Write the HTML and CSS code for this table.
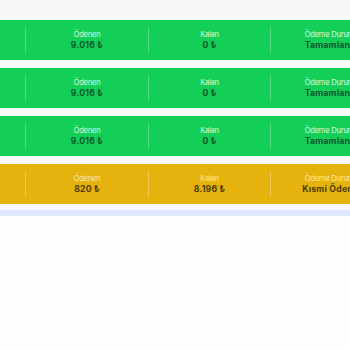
FILE: index.html
```html
<!DOCTYPE html>
<html lang="tr">
<head>
<meta charset="utf-8">
<link rel="stylesheet" href="styles.css">
</head>
<body>
<div class="list">
  <div class="card paid">
    <div class="cell"></div>
    <div class="cell"><span class="label">Ödenen</span><span class="value">9.016 ₺</span></div>
    <div class="cell"><span class="label">Kalan</span><span class="value">0 ₺</span></div>
    <div class="cell"><span class="label">Ödeme Durumu</span><span class="value">Tamamlandı</span></div>
  </div>
  <div class="card paid">
    <div class="cell"></div>
    <div class="cell"><span class="label">Ödenen</span><span class="value">9.016 ₺</span></div>
    <div class="cell"><span class="label">Kalan</span><span class="value">0 ₺</span></div>
    <div class="cell"><span class="label">Ödeme Durumu</span><span class="value">Tamamlandı</span></div>
  </div>
  <div class="card paid">
    <div class="cell"></div>
    <div class="cell"><span class="label">Ödenen</span><span class="value">9.016 ₺</span></div>
    <div class="cell"><span class="label">Kalan</span><span class="value">0 ₺</span></div>
    <div class="cell"><span class="label">Ödeme Durumu</span><span class="value">Tamamlandı</span></div>
  </div>
  <div class="card partial">
    <div class="cell"></div>
    <div class="cell"><span class="label">Ödenen</span><span class="value">820 ₺</span></div>
    <div class="cell"><span class="label">Kalan</span><span class="value">8.196 ₺</span></div>
    <div class="cell"><span class="label">Ödeme Durumu</span><span class="value">Kısmi Ödeme</span></div>
  </div>
  <div class="footer-bar"></div>
</div>
</body>
</html>
```
FILE: styles.css
```css
html, body {
  margin: 0;
  padding: 0;
  background: #fdfdfe;
  font-family: "Inter", "Liberation Sans", sans-serif;
}
.list {
  display: flex;
  flex-direction: column;
  gap: 8px;
  padding-top: 20px;
  background: #f8f8fa;
  overflow: hidden;
}
.card {
  display: grid;
  grid-template-columns: 26px 122px 122px 122px;
  height: 40px;
  padding: 7px 0;
  box-sizing: border-box;
  overflow: hidden;
  white-space: nowrap;
}
.paid { background: #13cf58; }
.partial { background: #e6b20d; }
.cell {
  display: flex;
  flex-direction: column;
  align-items: center;
  justify-content: center;
  border-left: 1px solid rgba(255,255,255,0.28);
  gap: 1px;
}
.cell:first-child { border-left: none; border-right: 1px solid rgba(255,255,255,0.28); }
.cell:nth-child(2) { border-left: none; }
.label {
  font-size: 7.5px;
  line-height: 9px;
  letter-spacing: -0.2px;
}
.value {
  font-size: 8.7px;
  line-height: 10px;
  font-weight: 700;
  letter-spacing: 0.2px;
}
.paid .label { color: #dcf8e5; }
.paid .value { color: #0d5a2b; }
.partial .label { color: #fce9aa; }
.partial .value { color: #4e3b05; }
.footer-bar {
  height: 6px;
  background: #dfe9fb;
  margin-top: -2px;
}
```
